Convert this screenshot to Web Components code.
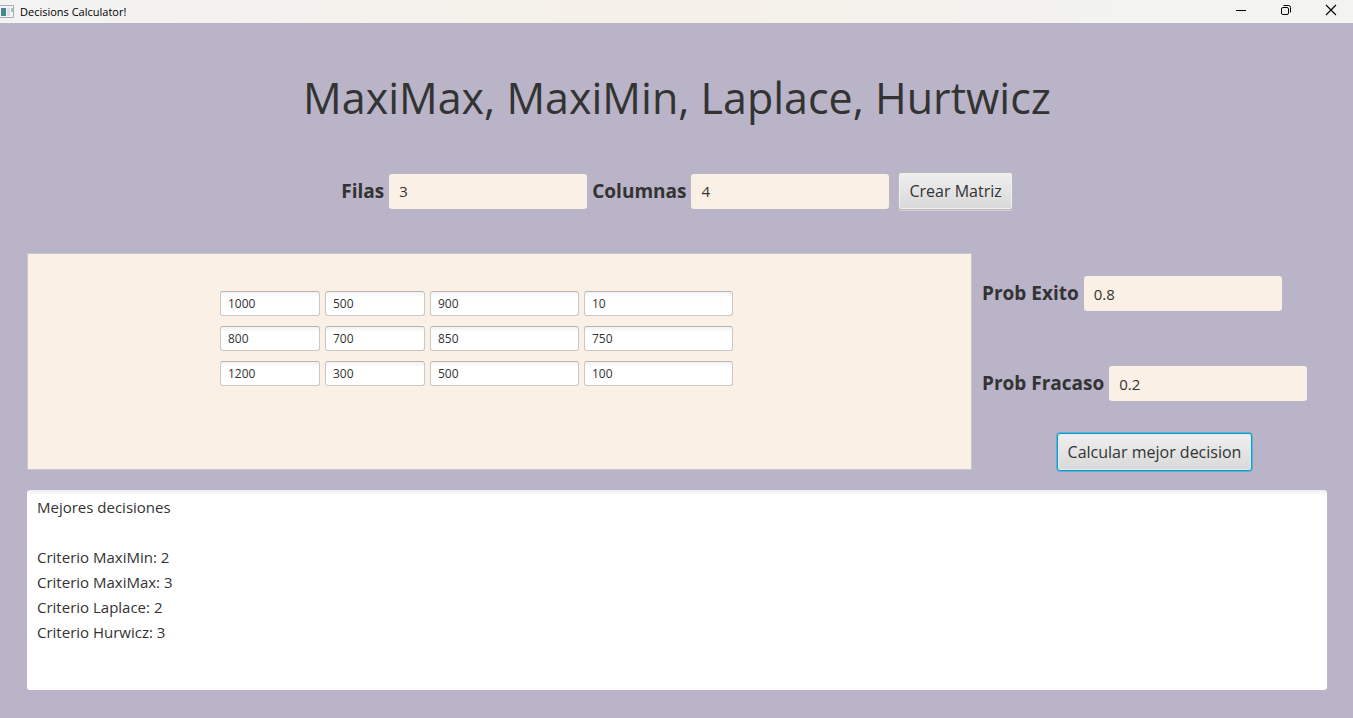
<!DOCTYPE html>
<html lang="es">
<head>
<meta charset="utf-8">
<meta name="viewport" content="width=device-width, initial-scale=1">
<title>Decisions Calculator!</title>
<style>
  body { margin: 0; font-family: "Open Sans", "Noto Sans", sans-serif; color: #333; background: #b9b4c7; }
</style>
</head>
<body>
<decisions-app></decisions-app>

<template id="window-bar">
  <style>
    :host { display: flex; align-items: center; justify-content: space-between; height: 23px; background: linear-gradient(90deg, #f3f3f3, #f5f1e8 50%, #f3f3f2 85%); color: #000; font-size: 11px; line-height: 16px; }
    .name { display: flex; align-items: center; gap: 6px; }
    .controls { display: flex; height: 100%; padding-bottom: 3px; box-sizing: border-box; }
    button { width: 45px; padding: 0; border: 0; background: none; display: flex; align-items: center; justify-content: center; }
    svg { display: block; }
  </style>
  <div class="name">
    <svg width="14" height="13" viewBox="0 0 14 13" aria-hidden="true">
      <defs><linearGradient id="g" x2="0" y2="1"><stop offset="0" stop-color="#4c7fa6"/><stop offset="1" stop-color="#3f9278"/></linearGradient></defs>
      <path d="M0 .5H13.5V12.5H0" fill="#f4f5f7" stroke="#a9adb5"/>
      <rect x="1" y="3" width="5" height="8" fill="url(#g)"/>
      <rect x="7" y="3" width="3" height="8" fill="#dfe0e8"/>
      <path d="M11 3h2v4h-2z" fill="#9cc5b8"/>
    </svg>
    <span><slot></slot></span>
  </div>
  <div class="controls">
    <button type="button" aria-label="Minimizar"><svg width="12" height="12"><path d="M1 6.5H11" stroke="#000"/></svg></button>
    <button type="button" aria-label="Restaurar"><svg width="12" height="12" fill="none" stroke="#000"><rect x="1.5" y="3.5" width="7" height="7" rx="1.5"/><path d="M3.5 1.5H8.5Q10.5 1.5 10.5 3.5V8.5"/></svg></button>
    <button type="button" aria-label="Cerrar"><svg width="12" height="12"><path d="M1 1L11 11M11 1L1 11" stroke="#000" stroke-width="1.1"/></svg></button>
  </div>
</template>

<template id="labeled-field">
  <style>
    :host { display: block; }
    label { display: flex; align-items: center; gap: 5px; font-size: 19px; font-weight: 700; line-height: 26px; white-space: nowrap; }
    .caption { padding-bottom: 1px; }
    input { box-sizing: border-box; width: 198px; height: 35px; margin: 0; padding: 0 10px; border: 0; border-radius: 3px; background: #faf0e6; color: #333; font: 400 15px/25px "Open Sans", "Noto Sans", sans-serif; outline: 0; }
  </style>
  <label><span class="caption"><slot></slot></span><input type="text"></label>
</template>

<template id="action-button">
  <style>
    :host { display: inline-block; }
    button { display: block; box-sizing: border-box; height: 38px; margin: 0; padding: 0 10px; border: 1px solid #bababa; border-radius: 3px; background: linear-gradient(#efefef, #d9d9d9); box-shadow: inset 0 0 0 1px #f0f0f0, 0 1px 0 #d5d1dc; color: #333; font: 16px/24px "Open Sans", "Noto Sans", sans-serif; white-space: nowrap; }
    :host([active]) button { border-color: #039ed3; box-shadow: inset 0 0 0 1px #d9eef5, 0 0 0 1px #039ed366; }
  </style>
  <button type="button"><slot></slot></button>
</template>

<template id="payoff-matrix">
  <style>
    :host { display: block; box-sizing: border-box; padding: 37px 192px; border: 1px solid #c8c8c8; background: #faf0e6; }
    .cells { display: grid; grid-template-columns: 100px 100px 149px 149px; grid-auto-rows: 25px; gap: 10px 5px; }
    input { box-sizing: border-box; width: 100%; height: 25px; margin: 0; padding: 0 7px; border: 1px solid #c8c8c8; border-top-color: #b5b5b5; border-radius: 3px; background: linear-gradient(#f2f2f2, #fff 5px); color: #333; font: 12px/16px "Open Sans", "Noto Sans", sans-serif; }
  </style>
  <div class="cells" role="group" aria-label="Matriz"></div>
</template>

<template id="result-box">
  <style>
    :host { display: block; }
    textarea { display: block; box-sizing: border-box; width: 100%; height: 200px; margin: 0; padding: 5px 10px; border: 0; border-radius: 3px; background: linear-gradient(#ececec, #fff 5px); color: #333; font: 15px/25px "Open Sans", "Noto Sans", sans-serif; resize: none; outline: 0; }
  </style>
  <textarea aria-label="Resultados"></textarea>
</template>

<template id="decisions-app">
  <style>
    :host { display: block; }
    main { padding: 43px 26px 28px 27px; }
    h1 { margin: 0; text-align: center; font-size: 43px; font-weight: 400; line-height: 64px; }
    .size { display: flex; justify-content: center; align-items: center; gap: 5px; margin-top: 42px; }
    .size action-button { margin-left: 4px; }
    .work { display: flex; align-items: flex-start; gap: 10px; margin: 43px 0 19px; }
    payoff-matrix { flex: 1; min-width: 0; height: 217px; }
    .side { flex: 0 0 345px; display: flex; flex-direction: column; padding-top: 23px; box-sizing: border-box; }
    .side labeled-field + labeled-field { margin-top: 55px; }
    .side action-button { align-self: center; margin-top: 32px; }
  </style>
  <window-bar>Decisions Calculator!</window-bar>
  <main>
    <h1>MaxiMax, MaxiMin, Laplace, Hurtwicz</h1>
    <div class="size">
      <labeled-field value="3">Filas</labeled-field>
      <labeled-field value="4">Columnas</labeled-field>
      <action-button>Crear Matriz</action-button>
    </div>
    <div class="work">
      <payoff-matrix rows="1000,500,900,10;800,700,850,750;1200,300,500,100"></payoff-matrix>
      <div class="side">
        <labeled-field value="0.8">Prob Exito</labeled-field>
        <labeled-field value="0.2">Prob Fracaso</labeled-field>
        <action-button active>Calcular mejor decision</action-button>
      </div>
    </div>
    <result-box></result-box>
  </main>
</template>

<script>
  class TemplateElement extends HTMLElement {
    constructor() {
      super();
      const template = document.getElementById(this.localName);
      this.attachShadow({ mode: "open" }).append(template.content.cloneNode(true));
    }
  }

  class WindowBar extends TemplateElement {}
  class ActionButton extends TemplateElement {}

  class LabeledField extends TemplateElement {
    connectedCallback() {
      this.shadowRoot.querySelector("input").value = this.getAttribute("value") || "";
    }
  }

  class PayoffMatrix extends TemplateElement {
    connectedCallback() {
      const cells = this.shadowRoot.querySelector(".cells");
      cells.replaceChildren();
      this.getAttribute("rows").split(";").forEach((row, r) => {
        row.split(",").forEach((value, c) => {
          const input = document.createElement("input");
          input.type = "text";
          input.value = value;
          input.setAttribute("aria-label", `Fila ${r + 1}, columna ${c + 1}`);
          cells.append(input);
        });
      });
    }
  }

  class ResultBox extends TemplateElement {
    connectedCallback() {
      this.shadowRoot.querySelector("textarea").value = [
        "Mejores decisiones",
        "",
        "Criterio MaxiMin: 2",
        "Criterio MaxiMax: 3",
        "Criterio Laplace: 2",
        "Criterio Hurwicz: 3"
      ].join("\n");
    }
  }

  class DecisionsApp extends TemplateElement {}

  customElements.define("window-bar", WindowBar);
  customElements.define("labeled-field", LabeledField);
  customElements.define("action-button", ActionButton);
  customElements.define("payoff-matrix", PayoffMatrix);
  customElements.define("result-box", ResultBox);
  customElements.define("decisions-app", DecisionsApp);
</script>
</body>
</html>
